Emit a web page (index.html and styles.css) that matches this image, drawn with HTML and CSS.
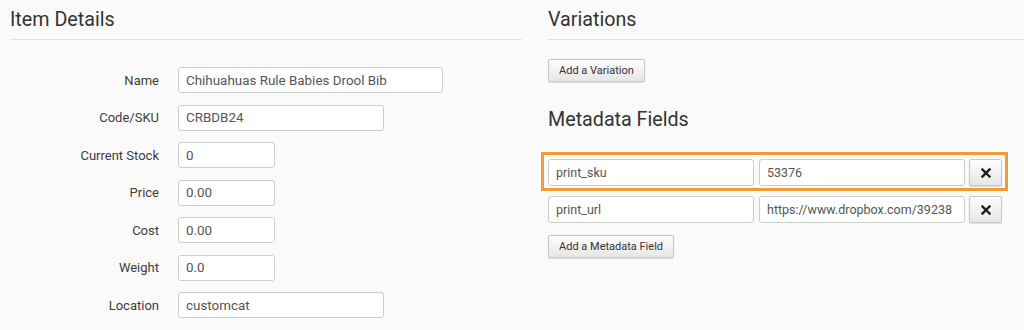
FILE: index.html
```html
<!DOCTYPE html>
<html>
  <head>
    <title>Edit Item</title>
    <meta name="viewport" content="width=device-width, initial-scale=1.0" />
    <link rel="stylesheet" href="styles.css">
  </head>
  <body>
    <article class="wrap">
      <section class="details">
        <h2 class="section-title ruled">Item Details</h2>
        <form class="fields">
          <label class="field">
            <span>Name</span>
            <input type="text" class="w-long" value="Chihuahuas Rule Babies Drool Bib" />
          </label>
          <label class="field">
            <span>Code/SKU</span>
            <input type="text" class="w-mid" value="CRBDB24" />
          </label>
          <label class="field">
            <span>Current Stock</span>
            <input type="text" class="w-short" value="0" />
          </label>
          <label class="field">
            <span>Price</span>
            <input type="text" class="w-short" value="0.00" />
          </label>
          <label class="field">
            <span>Cost</span>
            <input type="text" class="w-short" value="0.00" />
          </label>
          <label class="field">
            <span>Weight</span>
            <input type="text" class="w-short" value="0.0" />
          </label>
          <label class="field">
            <span>Location</span>
            <input type="text" class="w-mid" value="customcat" />
          </label>
        </form>
      </section>

      <section class="side">
        <h2 class="section-title ruled">Variations</h2>
        <button class="btn add-variation">Add a Variation</button>

        <h2 class="section-title meta-title">Metadata Fields</h2>
        <div class="meta-list">
          <div class="meta-row highlight">
            <input type="text" value="print_sku" />
            <input type="text" value="53376" />
            <button class="btn remove" title="Remove">
              <svg width="10" height="10" viewBox="0 0 10 10"><path d="M1.5 1.5 L8.5 8.5 M8.5 1.5 L1.5 8.5" stroke="#1e1e1e" stroke-width="2.4" stroke-linecap="square" /></svg>
            </button>
          </div>
          <div class="meta-row">
            <input type="text" value="print_url" />
            <input type="text" value="https://www.dropbox.com/39238" />
            <button class="btn remove" title="Remove">
              <svg width="10" height="10" viewBox="0 0 10 10"><path d="M1.5 1.5 L8.5 8.5 M8.5 1.5 L1.5 8.5" stroke="#1e1e1e" stroke-width="2.4" stroke-linecap="square" /></svg>
            </button>
          </div>
        </div>
        <button class="btn add-field">Add a Metadata Field</button>
      </section>
    </article>
  </body>
</html>
```

FILE: styles.css
```css
* {
  box-sizing: border-box;
}

body {
  margin: 0;
  font-family: Roboto, "Liberation Sans", sans-serif;
  font-size: 13px;
  color: #3d3d3d;
  background: #fafafa;
}

.wrap {
  display: flex;
  gap: 26px;
  padding: 6px 0 0 10px;
}

.details {
  width: 512px;
  flex-shrink: 0;
}

.side {
  flex-grow: 1;
  display: flex;
  flex-direction: column;
  align-items: flex-start;
}

.section-title {
  margin: 0;
  font-size: 19.7px;
  font-weight: 400;
  line-height: 28px;
  color: #333;
}

.section-title.ruled {
  align-self: stretch;
  padding-bottom: 5px;
  border-bottom: 1px solid #e2e2e2;
}

input[type=text] {
  height: 26px;
  margin: 0;
  padding: 0 7px;
  border: 1px solid #cdcdcd;
  border-radius: 3px;
  background: #fff;
  font-family: Roboto, "Liberation Sans", sans-serif;
  font-size: 13.4px;
  color: #555;
  outline: none;
}

.fields {
  display: flex;
  flex-direction: column;
  gap: 11.5px;
  margin-top: 27px;
}

.field {
  display: flex;
  align-items: center;
  gap: 19px;
}

.field span {
  width: 149px;
  text-align: right;
}

.w-long {
  width: 265px;
}

.w-mid {
  width: 206px;
}

.w-short {
  width: 97px;
}

.btn {
  margin: 0;
  border: 1px solid #c6c6c6;
  border-radius: 2px;
  background: linear-gradient(#fdfdfd, #e6e6e6);
  box-shadow: 0 1px 1px rgba(0, 0, 0, 0.12);
  font-family: Roboto, "Liberation Sans", sans-serif;
  font-size: 11px;
  color: #333;
  cursor: pointer;
}

.add-variation,
.add-field {
  height: 23px;
  padding: 0 10px;
}

.add-variation {
  margin-top: 19px;
}

.meta-title {
  margin-top: 24px;
}

.meta-list {
  display: flex;
  flex-direction: column;
  gap: 10px;
  margin-top: 25px;
}

.meta-row {
  display: flex;
  gap: 4px;
  position: relative;
}

.meta-row input[type=text] {
  width: 206px;
  height: 27px;
  padding: 0 7px;
  font-size: 12.5px;
}

.meta-row input[type=text] + input[type=text] {
  margin-left: 1px;
}

.meta-row .remove {
  width: 33px;
  height: 27px;
  display: flex;
  align-items: center;
  justify-content: center;
  padding: 0;
}

.meta-row.highlight::after {
  content: "";
  position: absolute;
  top: -7px;
  bottom: -5px;
  left: -7px;
  right: -6px;
  border: 3px solid #f39a34;
  pointer-events: none;
}

.add-field {
  margin-top: 12px;
}
```
